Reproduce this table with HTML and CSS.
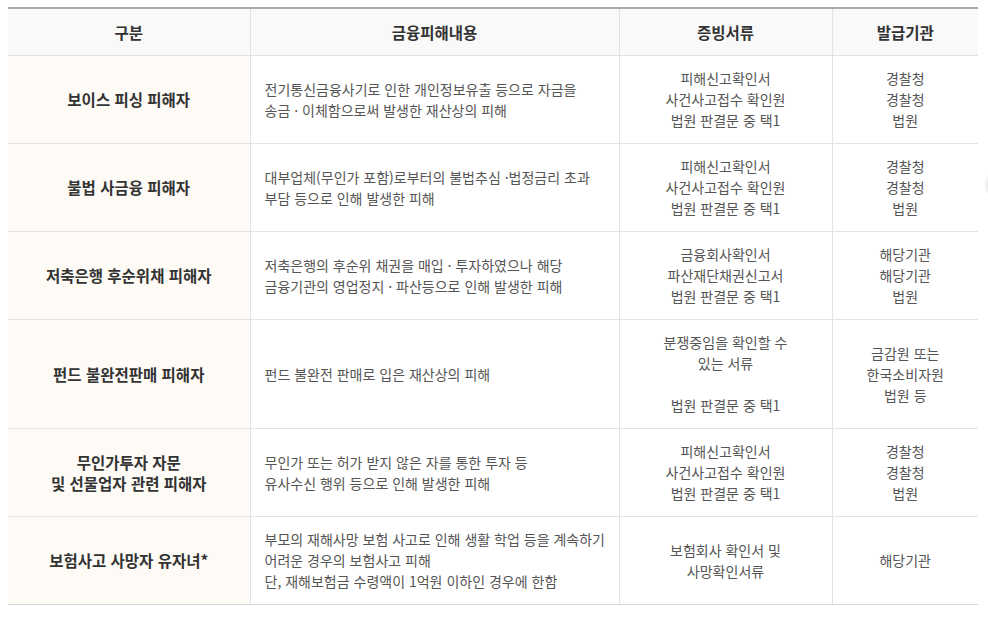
FILE: index.html
```html
<!DOCTYPE html>
<html lang="ko">
<head>
<meta charset="utf-8">
<link rel="stylesheet" href="styles.css">
</head>
<body>
<table class="tbl">
  <colgroup>
    <col class="c1"><col class="c2"><col class="c3"><col class="c4">
  </colgroup>
  <thead>
    <tr><th>구분</th><th>금융피해내용</th><th>증빙서류</th><th>발급기관</th></tr>
  </thead>
  <tbody>
    <tr>
      <td class="name">보이스 피싱 피해자</td>
      <td class="desc">전기통신금융사기로 인한 개인정보유출 등으로 자금을<br>송금 · 이체함으로써 발생한 재산상의 피해</td>
      <td class="mid">피해신고확인서<br>사건사고접수 확인원<br>법원 판결문 중 택1</td>
      <td class="mid">경찰청<br>경찰청<br>법원</td>
    </tr>
    <tr>
      <td class="name">불법 사금융 피해자</td>
      <td class="desc">대부업체(무인가 포함)로부터의 불법추심 ·법정금리 초과<br>부담 등으로 인해 발생한 피해</td>
      <td class="mid">피해신고확인서<br>사건사고접수 확인원<br>법원 판결문 중 택1</td>
      <td class="mid">경찰청<br>경찰청<br>법원</td>
    </tr>
    <tr>
      <td class="name">저축은행 후순위채 피해자</td>
      <td class="desc">저축은행의 후순위 채권을 매입 · 투자하였으나 해당<br>금융기관의 영업정지 · 파산등으로 인해 발생한 피해</td>
      <td class="mid">금융회사확인서<br>파산재단채권신고서<br>법원 판결문 중 택1</td>
      <td class="mid">해당기관<br>해당기관<br>법원</td>
    </tr>
    <tr>
      <td class="name">펀드 불완전판매 피해자</td>
      <td class="desc">펀드 불완전 판매로 입은 재산상의 피해</td>
      <td class="mid">분쟁중임을 확인할 수<br>있는 서류<br><br>법원 판결문 중 택1</td>
      <td class="mid">금감원 또는<br>한국소비자원<br>법원 등</td>
    </tr>
    <tr>
      <td class="name">무인가투자 자문<br>및 선물업자 관련 피해자</td>
      <td class="desc">무인가 또는 허가 받지 않은 자를 통한 투자 등<br>유사수신 행위 등으로 인해 발생한 피해</td>
      <td class="mid">피해신고확인서<br>사건사고접수 확인원<br>법원 판결문 중 택1</td>
      <td class="mid">경찰청<br>경찰청<br>법원</td>
    </tr>
    <tr>
      <td class="name">보험사고 사망자 유자녀*</td>
      <td class="desc">부모의 재해사망 보험 사고로 인해 생활 학업 등을 계속하기<br>어려운 경우의 보험사고 피해<br>단, 재해보험금 수령액이 1억원 이하인 경우에 한함</td>
      <td class="mid">보험회사 확인서 및<br>사망확인서류</td>
      <td class="mid">해당기관</td>
    </tr>
  </tbody>
</table>
<div class="edge-shadow"></div>
</body>
</html>
```
FILE: styles.css
```css
html, body {
  margin: 0;
  padding: 0;
  background: #fff;
}
body {
  padding: 7px 8px 8px 8px;
  font-family: "Noto Sans CJK KR", "Noto Sans", sans-serif;
  position: relative;
}
.tbl {
  width: 970px;
  border-collapse: collapse;
  table-layout: fixed;
  border-top: 2px solid #aaaaaa;
  border-bottom: 1px solid #d4d4d4;
}
.c1 { width: 242px; }
.c2 { width: 369px; }
.c3 { width: 213px; }
.c4 { width: 146px; }

.tbl th {
  height: 46px;
  padding: 0;
  background: #f9f9f9;
  color: #333;
  font-size: 15.5px;
  font-weight: 700;
  text-align: center;
  vertical-align: middle;
  border-bottom: 1px solid #e2e2e2;
  border-left: 1px solid #e2e2e2;
}
.tbl th:first-child, .tbl td:first-child { border-left: none; }

.tbl td {
  padding: 12px 14px;
  font-size: 14px;
  line-height: 21px;
  color: #555;
  vertical-align: middle;
  border-bottom: 1px solid #e2e2e2;
  border-left: 1px solid #e2e2e2;
}
.tbl tr:last-child td { border-bottom: none; }

.tbl td.name {
  background: #fefbf7;
  color: #333;
  font-weight: 700;
  font-size: 15.5px;
  text-align: center;
}
.tbl td.desc {
  text-align: left;
  white-space: nowrap;
  padding-right: 4px;
}
.tbl td.mid { text-align: center; }

.edge-shadow {
  position: absolute;
  left: 984px;
  top: 174px;
  width: 4px;
  height: 22px;
  background: radial-gradient(ellipse at right center, rgba(0,0,0,0.10), rgba(0,0,0,0) 70%);
}
```
